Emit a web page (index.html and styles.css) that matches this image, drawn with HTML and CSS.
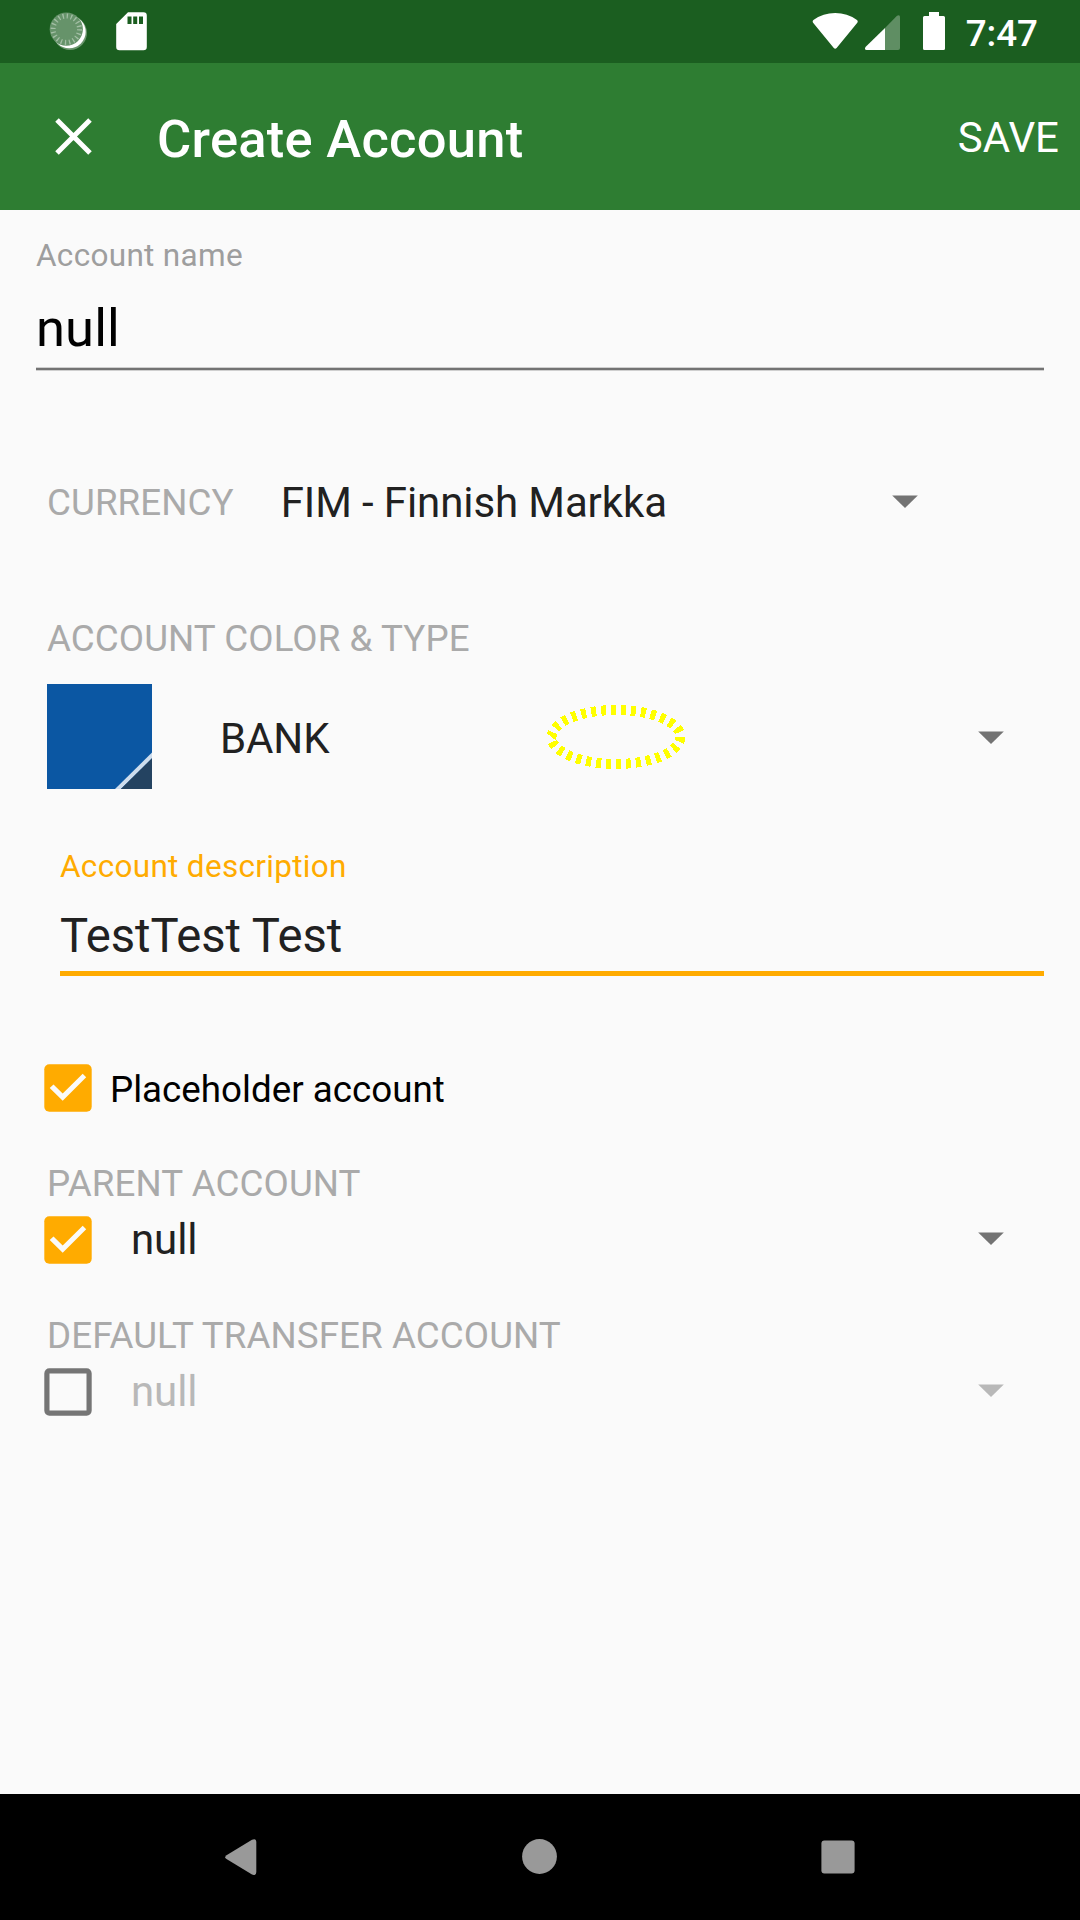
FILE: index.html
```html
<!DOCTYPE html>
<html lang="en">
<head>
<meta charset="utf-8">
<title>Create Account</title>
<link rel="stylesheet" href="styles.css">
</head>
<body>
<div class="screen">
  <header class="status">
    <svg class="status-left" width="160" height="63" viewBox="0 0 160 63">
      <circle cx="70" cy="33" r="17" fill="#fff" fill-opacity=".35"/>
      <circle cx="69.2" cy="31.8" r="16.5" fill="#fff"/>
      <circle cx="66.3" cy="29.2" r="16.6" fill="#66936a"/>
      <circle cx="66.3" cy="29.2" r="13.2" fill="none" stroke="#a3bfa5" stroke-width="5" stroke-dasharray="1.3 2.847"/>
      <path d="M128 12.3h15.5a3.3 3.3 0 0 1 3.3 3.3v31.4a3.3 3.3 0 0 1-3.3 3.3h-24a3.3 3.3 0 0 1-3.3-3.3V24z" fill="#fff"/>
      <path d="M127.5 16.5h4v7.5h-4zM133.2 16.5h4v7.5h-4zM139 16.5h4v7.5h-4z" fill="#1b5e20"/>
    </svg>
    <div class="status-right">
      <svg width="134" height="63" viewBox="812 0 134 63">
        <path d="M813.3 22.9Q811.8 21 813.8 19.8Q823 13 835.2 13T856.6 19.8Q858.6 21 857.1 22.9L836.6 48Q835.2 49.6 833.8 48Z" fill="#fff"/>
        <path d="M885 28l12-12.2q3-1.8 3 1.5v30.7q0 2-2 2h-13z" fill="#fff" fill-opacity=".3"/>
        <path d="M885 28v22h-18.500q-2.500-.5-1-3z" fill="#fff"/>
        <path d="M929 12h10v4h4.500q1.500 0 1.500 1.500v31q0 1.500-1.500 1.500h-19q-1.500 0-1.500-1.500v-31q0-1.500 1.500-1.500h4.500z" fill="#fff"/>
      </svg>
      <span class="clock">7:47</span>
    </div>
  </header>

  <div class="appbar">
    <svg class="close" width="37" height="37" viewBox="0 0 37 37"><path d="M2 2l33 33M35 2L2 35" stroke="#fff" stroke-width="5"/></svg>
    <h1 class="title">Create Account</h1>
    <span class="save">SAVE</span>
  </div>

  <main class="form">
    <section class="field name">
      <div class="hint">Account name</div>
      <div class="value">null</div>
      <div class="line"></div>
    </section>

    <section class="row currency">
      <span class="label">CURRENCY</span>
      <span class="choice">FIM - Finnish Markka</span>
      <svg class="arrow" width="26" height="13" viewBox="0 0 26 13"><path d="M.2.4h25.600L13 13z"/></svg>
    </section>

    <div class="label type-label">ACCOUNT COLOR &amp; TYPE</div>
    <section class="row type">
      <svg width="105" height="105" viewBox="0 0 105 105">
        <path d="M0 0h105v105H0z" fill="#0b57a3"/>
        <path d="M68 105L105 68.500v5.800L73.900 105z" fill="#cedded"/>
        <path d="M73.900 105L105 74.300V105z" fill="#244361"/>
      </svg>
      <span class="choice">BANK</span>
      <svg class="arrow" width="26" height="13" viewBox="0 0 26 13"><path d="M.2.4h25.600L13 13z"/></svg>
      <svg class="marker" width="140" height="66" viewBox="0 0 140 66"><ellipse cx="70" cy="33" rx="64.500" ry="27" fill="none" stroke="#ff0" stroke-width="10" pathLength="300" stroke-dasharray="5 5" shape-rendering="crispEdges"/></svg>
    </section>

    <section class="field description">
      <div class="hint">Account description</div>
      <div class="value">TestTest Test</div>
      <div class="line"></div>
    </section>

    <section class="row placeholder">
      <svg width="48" height="48" viewBox="0 0 48 48"><rect x=".3" y=".3" width="47.400" height="47.400" rx="5" fill="#ffab00"/><path d="M5.700 24l3.800-3.500 9.200 9 20-19.800 3.500 3.600-23.500 23.500z" fill="#fafafa"/></svg>
      <span class="choice">Placeholder account</span>
    </section>

    <div class="label parent-label">PARENT ACCOUNT</div>
    <section class="row account">
      <svg width="48" height="48" viewBox="0 0 48 48"><rect x=".3" y=".3" width="47.400" height="47.400" rx="5" fill="#ffab00"/><path d="M5.700 24l3.800-3.500 9.200 9 20-19.800 3.500 3.600-23.500 23.500z" fill="#fafafa"/></svg>
      <span class="choice">null</span>
      <svg class="arrow" width="26" height="13" viewBox="0 0 26 13"><path d="M.2.4h25.600L13 13z"/></svg>
    </section>

    <div class="label transfer-label">DEFAULT TRANSFER ACCOUNT</div>
    <section class="row account disabled">
      <svg width="48" height="48" viewBox="0 0 48 48"><rect x="2.900" y="2.900" width="42.200" height="42.200" rx="2.500" fill="none" stroke="#757575" stroke-width="5.200"/></svg>
      <span class="choice">null</span>
      <svg class="arrow" width="26" height="13" viewBox="0 0 26 13"><path d="M.2.4h25.600L13 13z"/></svg>
    </section>
  </main>

  <nav class="navbar">
    <svg width="32" height="36" viewBox="0 0 32 36"><path d="M1.500 16.200L27 .8q4.300-1.800 4.300 2.500v29.700q0 4.300-4.300 2.500L1.500 20.100q-2.500-2 0-3.900z"/></svg>
    <svg width="36" height="36" viewBox="0 0 36 36"><circle cx="18.500" cy="17.500" r="17.400"/></svg>
    <svg width="34" height="34" viewBox="0 0 34 34"><rect x=".4" y=".4" width="33.200" height="33.200" rx="3"/></svg>
  </nav>
</div>
</body>
</html>
```

FILE: styles.css
```css
* { box-sizing: border-box; }
body { margin: 0; font-family: Roboto, sans-serif; color: #212121; }
svg { display: block; flex: none; }
span { white-space: nowrap; }

.screen {
  width: 1080px;
  height: 1920px;
  display: flex;
  flex-direction: column;
  background: #fafafa;
}

.status {
  height: 63px;
  display: flex;
  justify-content: space-between;
  background: #1b5e20;
  color: #fff;
}
.status-right { display: flex; gap: 20px; padding-right: 42px; }
.clock { font-size: 36.75px; font-weight: 500; line-height: 67px; }

.appbar {
  height: 147px;
  display: flex;
  align-items: center;
  padding: 0 21px 0 55px;
  background: #2e7d32;
  color: #fff;
}
.title { margin: 4px 0 0 65px; font-size: 52.5px; font-weight: 500; line-height: 62px; letter-spacing: .27px; }
.save { margin: 2px 0 0 auto; font-size: 42px; line-height: 50px; }

.form { flex: 1; display: flex; flex-direction: column; padding-top: 26px; }

.field { margin-right: 36px; }
.hint { font-size: 31.5px; line-height: 40px; letter-spacing: .31px; }
.value { line-height: 60px; }
.name { margin-left: 36px; }
.name .hint { color: #9e9e9e; }
.name .value { margin-top: 22px; font-size: 52.5px; color: #000; letter-spacing: .1px; }
.name .line {
  height: 4px;
  margin-top: 9px;
  background: #737373;
  border: solid #cfcfcf;
  border-width: 1px 0;
}

.row { display: flex; align-items: center; }
.label { font-size: 36.75px; line-height: 44px; color: #aaa; letter-spacing: .07px; }
.choice { font-size: 42px; line-height: 50px; }
.arrow { margin-left: auto; fill: #737373; }

.currency { height: 61px; margin: 101px 162px 0 47px; }
.currency .choice { margin-left: 47px; letter-spacing: -.1px; }
.currency .arrow { margin-top: -2px; }

.type-label { margin: 84px 0 0 47px; }
.type { position: relative; height: 105px; margin: 23px 76px 0 47px; }
.type .choice { margin: 4px 0 0 68px; letter-spacing: -.1px; }
.type .arrow { margin-top: 1px; }
.marker { position: absolute; left: 498.500px; top: 20px; }

.description { margin: 58px 36px 0 60px; }
.description .hint { color: #ffab00; }
.description .value { margin-top: 19px; font-size: 47.25px; letter-spacing: -.08px; }
.description .line { height: 5px; margin-top: 5px; background: #ffab00; }

.placeholder { height: 48px; margin: 88px 76px 0 44px; }
.placeholder .choice { margin: 3px 0 0 18px; font-size: 36.75px; color: #000; }

.parent-label { margin: 50px 0 0 47px; }
.transfer-label { margin: 50px 0 0 47px; }
.account { height: 48px; margin: 10px 76px 0 44px; }
.account .choice { margin-left: 39px; letter-spacing: -.1px; }
.account .arrow { margin-top: -3px; }
.disabled .choice { color: #b8b8b8; }
.disabled .arrow { fill: #b8b8b8; }

.navbar {
  height: 126px;
  display: flex;
  align-items: center;
  justify-content: space-between;
  padding: 0 225px;
  background: #000;
  fill: #999;
}
```
